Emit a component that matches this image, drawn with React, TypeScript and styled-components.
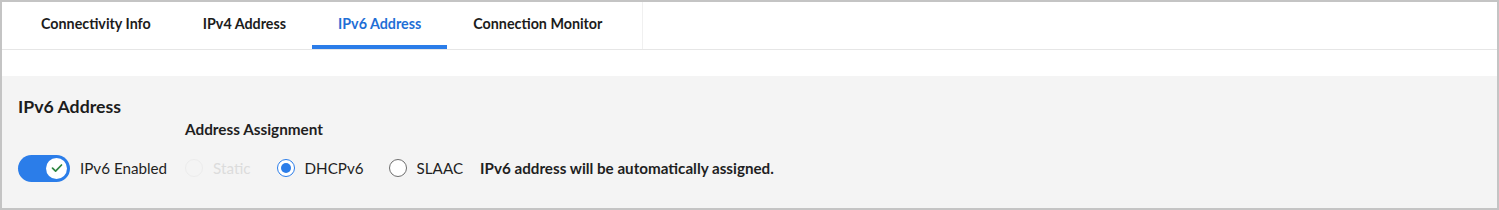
import React from "react";
import styled, { createGlobalStyle } from "styled-components";

const Global = createGlobalStyle`
  html, body { margin: 0; padding: 0; background: #fff; }
  body { font-family: Lato, "Open Sans", sans-serif; color: #1f1f1f; }
  * { box-sizing: border-box; }
`;

const Frame = styled.div`
  width: 1499px;
  height: 210px;
  border: 2px solid #c4c4c4;
  background: #fff;
  display: flex;
  flex-direction: column;
`;

const TabBar = styled.div`
  height: 48px;
  border-bottom: 1px solid #e6e6e6;
  display: flex;
`;

const TabList = styled.div`
  display: flex;
  padding: 0 14px 0 13px;
  border-right: 1px solid #f0f0f0;
`;

const Tab = styled.div<{ $active?: boolean }>`
  position: relative;
  display: flex;
  align-items: center;
  padding: 0 26px 5px;
  font-size: 14.3px;
  font-weight: 700;
  color: ${(p) => (p.$active ? "#1f6fd6" : "#1c1c1c")};
  &::after {
    content: "";
    position: absolute;
    left: 0;
    right: 0;
    bottom: 0;
    height: 4px;
    background: ${(p) => (p.$active ? "#2b7de9" : "transparent")};
  }
`;

const Spacer = styled.div`
  height: 26px;
`;

const Panel = styled.div`
  flex: 1;
  background: #f4f4f4;
  padding: 19px 16px 0;
`;

const Heading = styled.h2`
  margin: 0;
  font-size: 17.7px;
  font-weight: 700;
  line-height: 24px;
  color: #1c1c1c;
`;

const Label = styled.div`
  margin: 0 0 0 167px;
  font-size: 15.3px;
  font-weight: 700;
  line-height: 20px;
  color: #1f1f1f;
`;

const Row = styled.div`
  margin-top: 15px;
  display: flex;
  align-items: center;
  height: 28px;
`;

const Toggle = styled.div`
  width: 52px;
  height: 27px;
  border-radius: 14px;
  background: #2b7de9;
  display: flex;
  align-items: center;
  justify-content: flex-end;
  padding-right: 3px;
`;

const Knob = styled.div`
  width: 21px;
  height: 21px;
  border-radius: 50%;
  background: #fff;
  display: flex;
  align-items: center;
  justify-content: center;
`;

const OptText = styled.span<{ $disabled?: boolean; $bold?: boolean }>`
  font-size: 15.2px;
  font-weight: ${(p) => (p.$bold ? 700 : 400)};
  color: ${(p) => (p.$disabled ? "#dcdcdc" : "#1f1f1f")};
`;

const Option = styled.label<{ $gap?: number; $inner?: number }>`
  display: flex;
  align-items: center;
  gap: ${(p) => p.$inner ?? 10}px;
  margin-left: ${(p) => p.$gap ?? 0}px;
`;

const Radio = styled.span<{ $checked?: boolean; $disabled?: boolean }>`
  width: 18px;
  height: 18px;
  border-radius: 50%;
  border: 1px solid
    ${(p) => (p.$disabled ? "#ececec" : p.$checked ? "#2b7de9" : "#6e6e6e")};
  background: ${(p) => (p.$disabled ? "#f4f4f4" : "#fff")};
  display: flex;
  align-items: center;
  justify-content: center;
  &::after {
    content: "";
    width: 10px;
    height: 10px;
    border-radius: 50%;
    background: ${(p) => (p.$checked ? "#2b7de9" : "transparent")};
  }
`;

export default function App() {
  return (
    <>
      <Global />
      <Frame>
        <TabBar>
          <TabList>
            <Tab>Connectivity Info</Tab>
            <Tab>IPv4 Address</Tab>
            <Tab $active>IPv6 Address</Tab>
            <Tab>Connection Monitor</Tab>
          </TabList>
        </TabBar>
        <Spacer />
        <Panel>
          <Heading>IPv6 Address</Heading>
          <Label>Address Assignment</Label>
          <Row>
            <Option>
              <Toggle>
                <Knob>
                  <svg width="14" height="14" viewBox="0 0 14 14">
                    <path
                      d="M2.5 7.2 L5.6 10.2 L11.5 4"
                      fill="none"
                      stroke="#2e8540"
                      strokeWidth="1.7"
                      strokeLinecap="round"
                      strokeLinejoin="round"
                    />
                  </svg>
                </Knob>
              </Toggle>
              <OptText>IPv6 Enabled</OptText>
            </Option>
            <Option $gap={18}>
              <Radio $disabled />
              <OptText $disabled>Static</OptText>
            </Option>
            <Option $gap={26}>
              <Radio $checked />
              <OptText>DHCPv6</OptText>
            </Option>
            <Option $gap={25}>
              <Radio />
              <OptText>SLAAC</OptText>
            </Option>
            <Option $gap={17}>
              <OptText $bold>IPv6 address will be automatically assigned.</OptText>
            </Option>
          </Row>
        </Panel>
      </Frame>
    </>
  );
}
